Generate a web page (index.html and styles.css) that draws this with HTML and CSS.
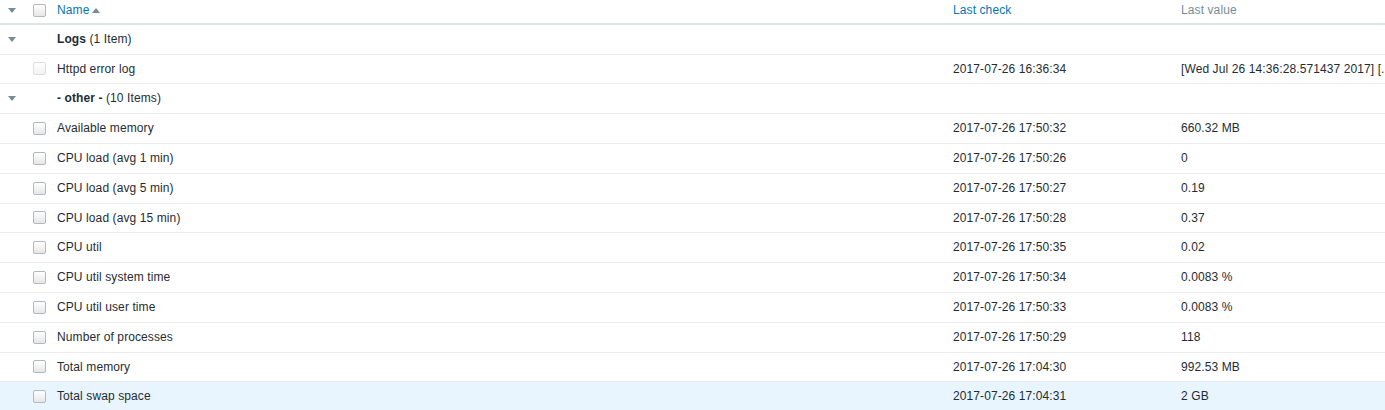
FILE: index.html
```html
<!DOCTYPE html>
<html>
<head>
<meta charset="utf-8">
<link rel="stylesheet" href="styles.css">
</head>
<body>
<table class="list">
  <colgroup>
    <col class="c-tog"><col class="c-chk"><col class="c-name"><col class="c-check"><col class="c-value">
  </colgroup>
  <thead>
    <tr>
      <th><span class="tri"></span></th>
      <th><span class="cb"></span></th>
      <th><a class="link">Name</a><span class="arrow"></span></th>
      <th><a class="link">Last check</a></th>
      <th class="muted">Last value</th>
    </tr>
  </thead>
  <tbody>
    <tr class="group">
      <td><span class="tri"></span></td><td></td>
      <td><b>Logs</b> (1 Item)</td><td></td><td></td>
    </tr>
    <tr>
      <td></td><td><span class="cb disabled"></span></td>
      <td>Httpd error log</td><td>2017-07-26 16:36:34</td><td>[Wed Jul 26 14:36:28.571437 2017] [...</td>
    </tr>
    <tr class="group">
      <td><span class="tri"></span></td><td></td>
      <td><b>- other -</b> (10 Items)</td><td></td><td></td>
    </tr>
    <tr><td></td><td><span class="cb"></span></td><td>Available memory</td><td>2017-07-26 17:50:32</td><td>660.32 MB</td></tr>
    <tr><td></td><td><span class="cb"></span></td><td>CPU load (avg 1 min)</td><td>2017-07-26 17:50:26</td><td>0</td></tr>
    <tr><td></td><td><span class="cb"></span></td><td>CPU load (avg 5 min)</td><td>2017-07-26 17:50:27</td><td>0.19</td></tr>
    <tr><td></td><td><span class="cb"></span></td><td>CPU load (avg 15 min)</td><td>2017-07-26 17:50:28</td><td>0.37</td></tr>
    <tr><td></td><td><span class="cb"></span></td><td>CPU util</td><td>2017-07-26 17:50:35</td><td>0.02</td></tr>
    <tr><td></td><td><span class="cb"></span></td><td>CPU util system time</td><td>2017-07-26 17:50:34</td><td>0.0083 %</td></tr>
    <tr><td></td><td><span class="cb"></span></td><td>CPU util user time</td><td>2017-07-26 17:50:33</td><td>0.0083 %</td></tr>
    <tr><td></td><td><span class="cb"></span></td><td>Number of processes</td><td>2017-07-26 17:50:29</td><td>118</td></tr>
    <tr><td></td><td><span class="cb"></span></td><td>Total memory</td><td>2017-07-26 17:04:30</td><td>992.53 MB</td></tr>
    <tr class="hover"><td></td><td><span class="cb"></span></td><td>Total swap space</td><td>2017-07-26 17:04:31</td><td>2 GB</td></tr>
  </tbody>
</table>
</body>
</html>
```
FILE: styles.css
```css
html, body {
  margin: 0;
  padding: 0;
  background: #ffffff;
  overflow: hidden;
}
body {
  font-family: "Liberation Sans", Arial, sans-serif;
  font-size: 12px;
  color: #1f2c33;
  letter-spacing: 0.1px;
}
.list {
  width: 1385px;
  border-collapse: collapse;
  table-layout: fixed;
}
.c-tog { width: 27px; }
.c-chk { width: 25px; }
.c-name { width: 896px; }
.c-check { width: 228px; }
.c-value { width: 209px; }

.list th {
  padding: 2px 5px 4px;
  text-align: left;
  font-weight: normal;
  border-bottom: 2px solid #dfe4e7;
  vertical-align: middle;
  white-space: nowrap;
  line-height: 16.8px;
}
.list td {
  padding: 6px 5px;
  border-bottom: 1px solid #ebeef0;
  vertical-align: middle;
  white-space: nowrap;
  overflow: hidden;
  line-height: 16.8px;
}
.list th:first-child, .list td:first-child { padding-left: 8px; padding-right: 0; }
.list th:nth-child(2), .list td:nth-child(2) { padding-left: 6px; padding-right: 0; }

.link {
  color: #0275b8;
  text-decoration: none;
}
.muted { color: #768d99; }
.arrow {
  display: inline-block;
  width: 0;
  height: 0;
  margin-left: 3px;
  border-left: 4px solid transparent;
  border-right: 4px solid transparent;
  border-bottom: 5px solid #768d99;
  vertical-align: 1px;
}
.tri {
  display: block;
  width: 0;
  height: 0;
  border-left: 4px solid transparent;
  border-right: 4px solid transparent;
  border-top: 5px solid #768d99;
}
.cb {
  display: block;
  width: 11px;
  height: 11px;
  border: 1px solid #acbbc2;
  border-radius: 2px;
  background: linear-gradient(#ffffff, #e6e6e6);
}
.cb.disabled {
  border-color: #d9dee1;
  background: linear-gradient(#ffffff, #f2f2f2);
}
.group b { font-weight: bold; }
.hover td { background: #e8f5ff; }
```
